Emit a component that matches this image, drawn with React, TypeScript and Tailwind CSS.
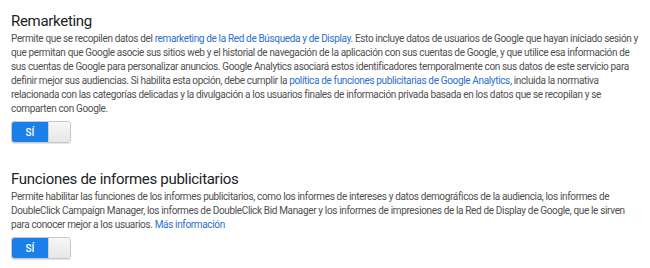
import React from "react";

const Toggle = () => (
  <div className="flex h-[22px] w-[60px] overflow-hidden rounded-[3px] border border-[#c9c9c9] shadow-[0_1px_1px_rgba(0,0,0,0.12)]">
    <div className="flex w-[36px] items-center justify-center bg-[#1a7fe8] text-[10px] font-medium text-white">
      SÍ
    </div>
    <div className="flex-1 bg-gradient-to-b from-[#f7f7f7] to-[#e6e6e6] border-l border-[#d0d0d0]" />
  </div>
);

const A = ({ children }: { children: React.ReactNode }) => (
  <span className="text-[#2a6fcc]">{children}</span>
);

export default function App() {
  return (
    <div className="w-[650px] h-[268px] bg-white pl-[11px] pr-[12px] pt-[10px] font-['Roboto',sans-serif] text-[#505050]">
      <h2 className="text-[15px] leading-[22px] tracking-[-0.02em] text-[#222]">Remarketing</h2>
      <p className="text-[10px] leading-[14px] tracking-[-0.035em]">
        Permite que se recopilen datos del <A>remarketing de la Red de Búsqueda y de Display</A>. Esto incluye datos de
        usuarios de Google que hayan iniciado sesión y que permitan que Google asocie sus sitios web y el historial de
        navegación de la aplicación con sus cuentas de Google, y que utilice esa información de sus cuentas de Google
        para personalizar anuncios. Google Analytics asociará estos identificadores temporalmente con sus datos de este
        servicio para definir mejor sus audiencias. Si habilita esta opción, debe cumplir la{" "}
        <A>política de funciones publicitarias de Google Analytics</A>, incluida la normativa relacionada con las
        categorías delicadas y la divulgación a los usuarios finales de información privada basada en los datos que se
        recopilan y se comparten con Google.
      </p>
      <div className="mt-[5px]">
        <Toggle />
      </div>

      <h2 className="mt-[25px] text-[15px] leading-[22px] tracking-[-0.02em] text-[#222]">
        Funciones de informes publicitarios
      </h2>
      <p className="text-[10px] leading-[14px] tracking-[-0.035em]">
        Permite habilitar las funciones de los informes publicitarios, como los informes de intereses y datos
        demográficos de la audiencia, los informes de DoubleClick Campaign Manager, los informes de DoubleClick Bid
        Manager y los informes de impresiones de la Red de Display de Google, que le sirven para conocer mejor a los
        usuarios. <A>Más información</A>
      </p>
      <div className="mt-[5px]">
        <Toggle />
      </div>
    </div>
  );
}
